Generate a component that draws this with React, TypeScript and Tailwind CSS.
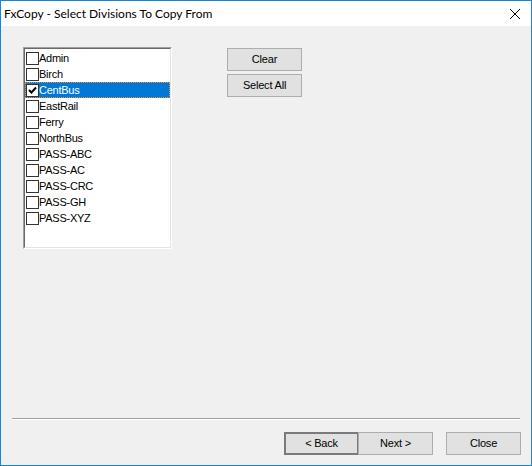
import React from "react";

const items = ["Admin", "Birch", "CentBus", "EastRail", "Ferry", "NorthBus", "PASS-ABC", "PASS-AC", "PASS-CRC", "PASS-GH", "PASS-XYZ"];

function Btn({ label, def = false, className = "" }: { label: string; def?: boolean; className?: string }) {
  return (
    <div
      className={
        "flex items-center justify-center h-[23px] w-[75px] bg-[#e1e1e1] text-black text-[11px] tracking-[-0.2px] " +
        (def ? "border-2 border-[#7a7a7a] " : "border border-[#adadad] ") +
        className
      }
    >
      {label}
    </div>
  );
}

export default function App() {
  return (
    <div
      className="w-[532px] h-[466px] border border-[#1883d7] bg-[#f0f0f0] flex flex-col"
      style={{ fontFamily: '"Liberation Sans", Arial, sans-serif' }}
    >
      <div className="h-[25px] bg-white flex items-center justify-between pl-[3px] pr-[10px]">
        <span className="text-[12px] text-black" style={{ fontFamily: 'Lato, "Noto Sans", sans-serif' }}>
          FxCopy - Select Divisions To Copy From
        </span>
        <svg width="12" height="12" viewBox="0 0 12 12">
          <path d="M1 1 L11 11 M11 1 L1 11" stroke="#000" strokeWidth="1" />
        </svg>
      </div>
      <div className="flex-1 flex flex-col">
        <div className="flex-1 flex items-start pt-[21px] pl-[22px]">
          <div className="w-[149px] h-[202px] border-t border-l border-[#a0a0a0] border-r border-b border-r-white border-b-white">
            <div className="w-full h-full border-t border-l border-[#696969] border-r border-b border-r-[#e3e3e3] border-b-[#e3e3e3] bg-white pt-[1px]">
              {items.map((it) => {
                const sel = it === "CentBus";
                return (
                  <div
                    key={it}
                    className={
                      "h-[16px] flex items-center text-[11px] leading-none pl-[1px] tracking-[-0.25px] " +
                      (sel ? "bg-[#0078d7] text-white border border-dotted border-[#ff8c28]" : "text-black")
                    }
                  >
                    <div className={"w-[13px] h-[13px] border border-[#333] bg-white flex items-center justify-center " + (sel ? "-ml-[1px]" : "")}>
                      {sel && (
                        <svg width="9" height="9" viewBox="0 0 9 9">
                          <path d="M1 4 L3.5 6.5 L8 1.5" stroke="#000" strokeWidth="2" fill="none" />
                        </svg>
                      )}
                    </div>
                    <span>{it}</span>
                  </div>
                );
              })}
            </div>
          </div>
          <div className="flex flex-col gap-[3px] ml-[55px] mt-[1px]">
            <Btn label="Clear" />
            <Btn label="Select All" />
          </div>
        </div>
        <div className="mx-[11px] h-[2px] border-t border-[#a0a0a0] border-b border-b-white"></div>
        <div className="flex justify-end items-center pr-[10px] pt-[12px] pb-[10px]">
          <Btn label="< Back" def />
          <Btn label="Next >" className="-ml-[1px]" />
          <Btn label="Close" className="ml-[13px]" />
        </div>
      </div>
    </div>
  );
}
